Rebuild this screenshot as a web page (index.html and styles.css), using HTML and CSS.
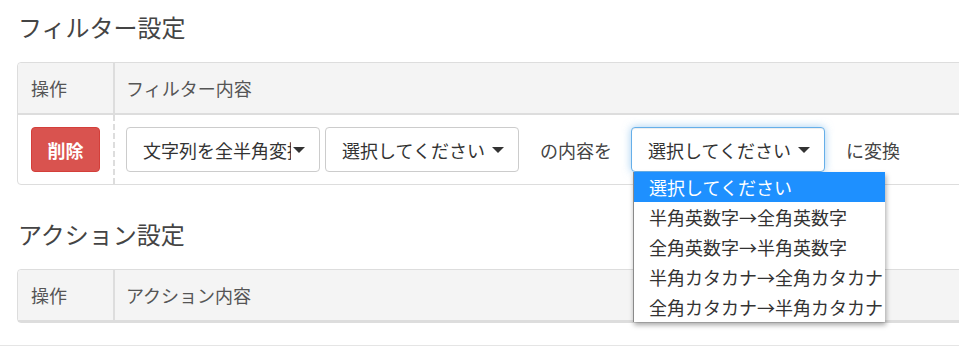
FILE: index.html
```html
<!DOCTYPE html>
<html lang="ja">
<head>
<meta charset="utf-8">
<title>設定</title>
<link rel="stylesheet" href="styles.css">
</head>
<body>
<div class="page">
  <section class="section">
    <h3 class="title">フィルター設定</h3>
    <div class="box">
      <div class="row head">
        <div class="c1">操作</div>
        <div class="c2">フィルター内容</div>
      </div>
      <div class="row body">
        <div class="c1"><button class="btn-del" type="button">削除</button></div>
        <div class="c2 dashed">
          <div class="sel"><span class="sel-text">文字列を全半角変換</span><span class="caret"></span></div>
          <div class="sel sel-2"><span class="sel-text">選択してください</span><span class="caret"></span></div>
          <span class="label">の内容を</span>
          <div class="sel focus">
            <span class="sel-text">選択してください</span><span class="caret"></span>
            <ul class="menu">
              <li class="opt active">選択してください</li>
              <li class="opt">半角英数字→全角英数字</li>
              <li class="opt">全角英数字→半角英数字</li>
              <li class="opt">半角カタカナ→全角カタカナ</li>
              <li class="opt">全角カタカナ→半角カタカナ</li>
            </ul>
          </div>
          <span class="label">に変換</span>
        </div>
      </div>
    </div>
  </section>
  <section class="section">
    <h3 class="title">アクション設定</h3>
    <div class="box">
      <div class="row head">
        <div class="c1">操作</div>
        <div class="c2">アクション内容</div>
      </div>
    </div>
  </section>
</div>
<div class="footer-line"></div>
</body>
</html>
```
FILE: styles.css
```css
html, body {
  margin: 0;
  padding: 0;
  background: #fff;
  overflow: hidden;
}
body {
  font-family: "Noto Sans CJK JP", "Noto Sans", sans-serif;
  font-size: 18px;
  color: #333;
}
.page {
  padding: 0 0 0 17px;
}
.section {
  display: flow-root;
  margin-bottom: 22px;
}
.title {
  margin: 13px 0 22px 1px;
  font-size: 24px;
  font-weight: 400;
  line-height: 27px;
  color: #444;
}
.box {
  border: 1px solid #ddd;
  border-radius: 4px;
  margin-right: -60px;
}
.row {
  display: flex;
}
.head {
  background: #f4f4f4;
  height: 50px;
  border-bottom: 2px solid #ddd;
  color: #555;
  border-radius: 4px 4px 0 0;
}
.c1 {
  width: 82px;
  padding-left: 13px;
  display: flex;
  align-items: center;
}
.c2 {
  flex: 1;
  padding-left: 11px;
  display: flex;
  align-items: center;
}
.head .c2 {
  border-left: 2px solid #ddd;
}
.body {
  height: 69px;
}
.dashed {
  padding-left: 13px;
  background-image: repeating-linear-gradient(to bottom, #ddd 0, #ddd 6px, transparent 6px, transparent 9px);
  background-size: 2px 100%;
  background-repeat: no-repeat;
  background-position: left top;
}
.btn-del {
  width: 69px;
  height: 45px;
  margin: 0;
  padding: 0;
  border: 1px solid #d43f3a;
  border-radius: 4px;
  background: #d9534f;
  color: #fff;
  font-family: inherit;
  font-size: 18px;
  font-weight: 700;
  display: flex;
  align-items: center;
  justify-content: center;
}
.sel {
  position: relative;
  box-sizing: border-box;
  width: 194px;
  height: 45px;
  border: 1px solid #ccc;
  border-radius: 4px;
  background: #fff;
  padding: 0 14px 0 16px;
  display: flex;
  align-items: center;
  color: #333;
}
.sel-2 {
  margin-left: 5px;
}
.sel-text {
  flex: 1;
  overflow: hidden;
  white-space: nowrap;
  margin-right: 2px;
}
.caret {
  width: 0;
  height: 0;
  border-left: 6px solid transparent;
  border-right: 6px solid transparent;
  border-top: 6px solid #333;
  flex: none;
}
.label {
  padding: 0 19px 0 21px;
  color: #444;
}
.focus {
  border-color: #66afe9;
  box-shadow: inset 0 1px 1px rgba(0, 0, 0, .075), 0 0 8px rgba(102, 175, 233, .6);
}
.menu {
  position: absolute;
  left: 1px;
  top: calc(100% + 1px);
  width: 252px;
  box-sizing: border-box;
  margin: 0;
  padding: 0;
  list-style: none;
  background: #fff;
  border-left: 1px solid #8a8a8a;
  box-shadow: 1px 3px 5px rgba(0, 0, 0, .35);
  z-index: 5;
}
.opt {
  height: 30px;
  line-height: 30px;
  padding-left: 15px;
  white-space: nowrap;
  color: #333;
}
.opt.active {
  background: #1e90ff;
  color: #fff;
}
.footer-line {
  border-top: 1px solid #e5e5e5;
}
```
